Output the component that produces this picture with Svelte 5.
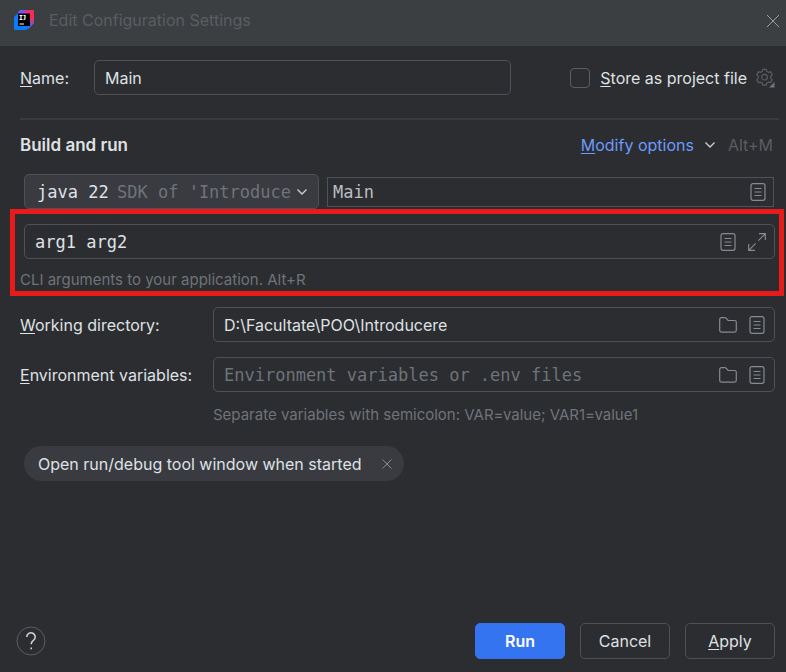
<script>
  let name = $state('Main');
  let storeAsFile = $state(false);
  let sdk = $state('java 22');
  let mainClass = $state('Main');
  let args = $state('arg1 arg2');
  let workingDir = $state('D:\\Facultate\\POO\\Introducere');
  let env = $state('');
  let openToolWindow = $state(true);
</script>

{#snippet listIcon()}
  <svg class="icon" viewBox="0 0 20 20" aria-hidden="true">
    <rect x="3" y="1.7" width="14" height="16.6" rx="2" />
    <path d="M6.5 6.5h7M6.5 10h7M6.5 13.5h7" />
  </svg>
{/snippet}

{#snippet folderIcon()}
  <svg class="icon" viewBox="0 0 20 20" aria-hidden="true">
    <path d="M1.7 4.5a1.8 1.8 0 0 1 1.8-1.8h3.4c.5 0 .9.2 1.2.5l2 2.3h6.400a1.800 1.800 0 0 1 1.800 1.800v8a1.800 1.800 0 0 1-1.800 1.800h-13a1.800 1.800 0 0 1-1.800-1.800z" />
  </svg>
{/snippet}

<div class="dialog">
  <header>
    <svg class="logo" viewBox="0 0 20 20" aria-hidden="true">
      <defs>
        <linearGradient id="pink" x1="0" y1="0.3" x2="1" y2="0.3">
          <stop offset="0.2" stop-color="#6b57ff" />
          <stop offset="0.75" stop-color="#fe2857" />
        </linearGradient>
        <linearGradient id="side" x1="0" y1="0" x2="0" y2="1">
          <stop offset="0.3" stop-color="#fe2857" stop-opacity="0" />
          <stop offset="0.8" stop-color="#3a6bff" />
        </linearGradient>
      </defs>
      <path d="M6 0h13.2c.5 0 .8.3.8.8V13l-6 6H4V2z" fill="url(#pink)" />
      <path d="M6 0h13.2c.5 0 .8.3.8.8V13l-6 6H4V2z" fill="url(#side)" />
      <path d="M0 7l4-4v13h12l-3 3.3a2 2 0 0 1-1.4.7H1.200A1.200 1.200 0 0 1 0 18.800z" fill="#087cfa" />
      <path d="M4 3.500h12V16H4z" fill="#000" />
      <path d="M5.500 5.500h3M7 5.500v4M5.500 9.500h3M9.500 5.500h1.500v3q0 1-1.500 1M5.500 14h4.500" fill="none" stroke="#fff" stroke-width="1.200" />
    </svg>
    <h1>Edit Configuration Settings</h1>
    <button class="plain" aria-label="Close">
      <svg class="close" viewBox="0 0 14 14" aria-hidden="true"><path d="M1 1l12 12M13 1L1 13" /></svg>
    </button>
  </header>

  <main>
    <div class="row name-row">
      <label for="name"><u>N</u>ame:</label>
      <div class="field">
        <input id="name" type="text" bind:value={name} />
      </div>
      <div class="store">
        <input id="store" type="checkbox" bind:checked={storeAsFile} />
        <label for="store"><u>S</u>tore as project file</label>
        <button class="plain" aria-label="Storage settings">
          <svg class="gear" viewBox="0 0 20 20" aria-hidden="true">
            <path d="M7.300 3.200L7.900 1.300h3.200l.6 1.900 1.900 1.100 2-.5 1.600 2.800-1.400 1.500v2.200l1.400 1.500-1.600 2.800-2-.5-1.900 1.100-.6 1.900H7.900l-.6-1.900-1.900-1.100-2 .5-1.600-2.800 1.400-1.500V8.100L1.800 6.600l1.600-2.800 2 .5z" />
            <circle cx="9.500" cy="9.200" r="2.800" />
            <path class="corner" d="M19.500 14v5.500H14z" />
          </svg>
        </button>
      </div>
    </div>

    <hr />

    <div class="row section-row">
      <h2>Build and run</h2>
      <div class="modify">
        <a href="#modify"><u>M</u>odify options</a>
        <svg class="chevron" viewBox="0 0 12 12" aria-hidden="true"><path d="M1.500 3.500L6 8l4.500-4.500" /></svg>
        <span>Alt+M</span>
      </div>
    </div>

    <div class="row run-row">
      <div class="combo">
        <select aria-label="JRE" bind:value={sdk}>
          <option>java 22</option>
        </select>
        <span>SDK of 'Introduce</span>
        <svg class="chevron" viewBox="0 0 12 12" aria-hidden="true"><path d="M1.500 3.500L6 8l4.500-4.500" /></svg>
      </div>
      <div class="field square">
        <input class="mono" type="text" aria-label="Main class" bind:value={mainClass} />
        <button class="plain" aria-label="Insert macros">{@render listIcon()}</button>
      </div>
    </div>

    <section class="highlight">
      <div class="field">
        <input class="mono" type="text" aria-label="Program arguments" bind:value={args} />
        <button class="plain" aria-label="Insert macros">{@render listIcon()}</button>
        <button class="plain" aria-label="Expand">
          <svg class="icon" viewBox="0 0 20 20" aria-hidden="true">
            <path d="M12 1.700h6.300V8M18.300 1.700l-7 7M1.700 12v6.300H8M1.700 18.300l7-7" />
          </svg>
        </button>
      </div>
      <p class="hint">CLI arguments to your application. Alt+R</p>
    </section>

    <div class="grid">
      <label for="dir"><u>W</u>orking directory:</label>
      <div class="field">
        <input id="dir" type="text" bind:value={workingDir} />
        <button class="plain" aria-label="Browse">{@render folderIcon()}</button>
        <button class="plain" aria-label="Insert macros">{@render listIcon()}</button>
      </div>
      <label for="env"><u>E</u>nvironment variables:</label>
      <div class="field">
        <input id="env" class="mono" type="text" placeholder="Environment variables or .env files" bind:value={env} />
        <button class="plain" aria-label="Browse">{@render folderIcon()}</button>
        <button class="plain" aria-label="Insert macros">{@render listIcon()}</button>
      </div>
    </div>
    <p class="hint env-hint">Separate variables with semicolon: VAR=value; VAR1=value1</p>

    {#if openToolWindow}
      <div class="chip">
        <span>Open run/debug tool window when started</span>
        <button class="plain" aria-label="Remove option" onclick={() => (openToolWindow = false)}>
          <svg class="remove" viewBox="0 0 10 10" aria-hidden="true"><path d="M.5.5l9 9M9.500.5l-9 9" /></svg>
        </button>
      </div>
    {/if}
  </main>

  <footer>
    <button class="help" aria-label="Help">
      <svg viewBox="0 0 30 30" aria-hidden="true">
        <circle cx="15" cy="15" r="14" />
        <path d="M10.800 11a4.200 4.200 0 1 1 6.600 3.400c-1.500 1-2.200 1.700-2.200 3.800M15.200 21.400v1.900" />
      </svg>
    </button>
    <button class="btn primary">Run</button>
    <button class="btn">Cancel</button>
    <button class="btn"><u>A</u>pply</button>
  </footer>
</div>

<style>
  :global(body) {
    margin: 0;
    background: #2b2d30;
  }

  .dialog {
    display: flex;
    flex-direction: column;
    min-height: 100vh;
    background: #2b2d30;
    color: #dfe1e5;
    font-family: Inter, "Liberation Sans", sans-serif;
    font-size: 16px;
    line-height: 20px;
  }

  .dialog :is(input, button, select) {
    font: inherit;
    color: inherit;
  }

  u {
    text-underline-offset: 2px;
    text-decoration-skip-ink: none;
  }

  svg {
    display: block;
    fill: none;
    stroke: currentColor;
  }

  .plain {
    padding: 0;
    border: 0;
    background: none;
  }

  header {
    display: flex;
    align-items: center;
    height: 46px;
    padding: 0 6px 0 14px;
    background: #3c3f41;
    box-sizing: border-box;
  }
  header h1 {
    flex: 1;
    margin: 0;
    padding: 0 0 6px 15px;
    font-size: 16px;
    font-weight: 400;
    color: #5a5d61;
  }
  .logo {
    width: 20px;
    height: 20px;
    margin-bottom: 6px;
    stroke: none;
  }
  .close {
    width: 14px;
    height: 14px;
    margin-bottom: 4px;
    color: #9a9da1;
  }

  main {
    flex: 1;
    padding: 14px 11px 20px 20px;
  }

  .row {
    display: flex;
    align-items: center;
  }

  .field {
    display: flex;
    flex: 1;
    align-items: center;
    gap: 9px;
    min-width: 0;
    height: 35px;
    padding: 0 7px 0 10px;
    border: 1px solid #4e5157;
    border-radius: 5px;
    box-sizing: border-box;
  }
  .field input {
    flex: 1;
    min-width: 0;
    padding: 0;
    border: 0;
    outline: 0;
    background: none;
  }
  .field input::placeholder {
    color: #6f737a;
    opacity: 1;
  }
  .dialog .mono,
  .dialog .combo select,
  .combo span {
    font-family: "DejaVu Sans Mono", "Liberation Mono", monospace;
    font-size: 17px;
  }
  .icon {
    width: 20px;
    height: 20px;
    color: #868a91;
    stroke-width: 1.2;
  }

  .name-row label {
    flex: none;
  }
  .name-row > label {
    width: 74px;
  }
  .store {
    display: flex;
    align-items: center;
    margin-left: 59px;
  }
  .store input {
    appearance: none;
    width: 20px;
    height: 20px;
    margin: 0 10px 0 0;
    border: 1px solid #5a5d63;
    border-radius: 4px;
  }
  .store .plain {
    margin-left: 8px;
  }
  .gear {
    width: 20px;
    height: 20px;
    color: #5a5d63;
    stroke-width: 1.2;
  }
  .gear .corner {
    fill: #6f737a;
    stroke: none;
  }

  hr {
    height: 2px;
    margin: 23px -4px 15px 0;
    border: 0;
    background: #393b40;
  }

  .section-row {
    justify-content: space-between;
  }
  h2 {
    margin: 0;
    font-size: 17px;
    font-weight: 600;
  }
  .modify {
    display: flex;
    align-items: center;
    padding-right: 2px;
    color: #5a5d63;
  }
  .modify a {
    color: #6b9bfa;
    text-decoration: none;
  }
  .modify .chevron {
    margin: 0 12px 0 10px;
  }
  .chevron {
    flex: none;
    width: 12px;
    height: 12px;
    color: #ced0d6;
    stroke-width: 1.3;
  }

  .run-row {
    gap: 8px;
    margin: 19px 0 0 4px;
  }
  .combo {
    display: flex;
    align-items: center;
    flex: 0 1 295px;
    min-width: 0;
    height: 35px;
    padding: 0 10px 0 12px;
    border: 1px solid #4e5157;
    border-radius: 5px;
    background: #393b40;
    box-sizing: border-box;
  }
  .combo select {
    appearance: none;
    padding: 0;
    border: 0;
    background: none;
  }
  .combo span {
    flex: 1;
    min-width: 0;
    margin-left: 8px;
    overflow: hidden;
    white-space: nowrap;
    color: #6f737a;
  }
  .square {
    height: 30px;
    margin-right: 1px;
    padding-left: 5px;
    padding-right: 5px;
    border-radius: 0;
    color: #bcbec4;
  }

  .highlight {
    margin: 0 -9px 0 -10px;
    padding: 10px 4px 1px 9px;
    border: 5px solid #e81a1a;
  }

  .hint {
    margin: 0;
    font-size: 15px;
    color: #6f737a;
  }
  .highlight .hint {
    margin: 11px 0 0 -4px;
  }

  .grid {
    display: grid;
    grid-template-columns: 193px 1fr;
    row-gap: 15px;
    align-items: center;
    margin-top: 11px;
  }
  .env-hint {
    margin: 13px 0 0 193px;
  }

  .chip {
    display: inline-flex;
    align-items: center;
    gap: 20px;
    height: 35px;
    margin: 21px 0 0 4px;
    padding: 0 12px 0 14px;
    border-radius: 18px;
    background: #393b40;
  }
  .remove {
    width: 10px;
    height: 10px;
    color: #868a91;
  }

  footer {
    display: flex;
    align-items: center;
    gap: 15px;
    padding: 0 11px 13px 16px;
  }
  .help {
    width: 30px;
    height: 30px;
    margin-right: auto;
    padding: 0;
    border: 0;
    background: none;
  }
  .help circle {
    stroke: #5a5d63;
  }
  .help path {
    stroke: #ced0d6;
    stroke-width: 1.6;
  }
  .btn {
    width: 90px;
    height: 36px;
    padding: 0;
    border: 1px solid #4e5157;
    border-radius: 5px;
    background: none;
  }
  .dialog .primary {
    border-color: #3574f0;
    background: #3574f0;
    color: #fff;
    font-weight: 600;
  }
</style>
